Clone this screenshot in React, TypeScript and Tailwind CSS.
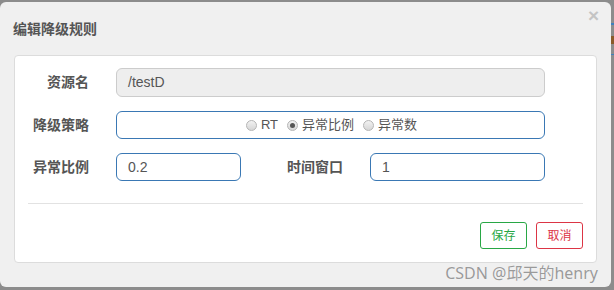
import React from "react";

const font = { fontFamily: '"Liberation Sans", "Noto Sans CJK SC", sans-serif' };

function Radio({ checked, label }: { checked?: boolean; label: string }) {
  return (
    <span className="flex items-center gap-[4px]">
      <span className="w-[11px] h-[11px] rounded-full border border-[#b5b5b5] bg-gradient-to-b from-[#f2f2f2] to-[#d6d6d6] flex items-center justify-center">
        {checked && <span className="w-[5px] h-[5px] rounded-full bg-[#555]" />}
      </span>
      <span>{label}</span>
    </span>
  );
}

export default function App() {
  return (
    <div className="w-[614px] h-[290px] bg-[#8c8c8c] pt-[2px] overflow-hidden relative" style={font}>
      <div className="absolute right-0 top-[23px] w-[3px] h-[2px] bg-[#3f7fbf]" />
      <div className="absolute right-0 top-[36px] w-[3px] h-[8px] bg-[#8a5a2a]" />
      <div className="absolute right-0 top-[54px] w-[3px] h-[1px] bg-[#3f7fbf]" />
      <div className="w-[611px] h-[285px] bg-[#f0f0f0] rounded-[6px] relative flex flex-col">
        <div className="h-[53px] flex items-center pl-[13px] pt-[1px]">
          <span className="text-[14px] font-bold text-[#555]">编辑降级规则</span>
        </div>
        <span className="absolute right-[12px] top-[4px] text-[19px] font-bold text-[#c4c4c4] leading-none">×</span>
        <div className="ml-[14px] w-[583px] h-[208px] bg-white border border-[#dcdcdc] rounded-[4px] flex flex-col">
          <div className="flex flex-col gap-[14px] pt-[12px] text-[13px] text-[#555]">
            <div className="flex items-center h-[29px]">
              <div className="w-[74px] text-right font-bold text-[14px]">资源名</div>
              <div className="ml-[27px] w-[429px] h-[29px] rounded-[6px] border border-[#cccccc] bg-[#eeeeee] flex items-center pl-[11px] text-[14px]">/testD</div>
            </div>
            <div className="flex items-center h-[28px]">
              <div className="w-[74px] text-right font-bold text-[14px]">降级策略</div>
              <div className="ml-[27px] w-[429px] h-[28px] rounded-[6px] border border-[#3a78b4] flex items-center justify-center gap-[9px] pl-[2px]">
                <Radio label="RT" />
                <Radio checked label="异常比例" />
                <Radio label="异常数" />
              </div>
            </div>
            <div className="flex items-center h-[28px]">
              <div className="w-[74px] text-right font-bold text-[14px]">异常比例</div>
              <div className="ml-[27px] w-[125px] h-[28px] rounded-[6px] border border-[#3a78b4] flex items-center pl-[11px] text-[14px]">0.2</div>
              <div className="ml-[46px] w-[58px] font-bold text-[14px]">时间窗口</div>
              <div className="ml-[25px] w-[175px] h-[28px] rounded-[6px] border border-[#3a78b4] flex items-center pl-[11px] text-[14px]">1</div>
            </div>
          </div>
          <div className="mx-[13px] mt-[22px] h-px bg-[#e2e2e2]" />
          <div className="flex justify-end gap-[9px] mr-[13px] mt-[18px]">
            <button className="w-[47px] h-[27px] rounded-[3px] border border-[#28a745] text-[#28a745] text-[12px] bg-white">保存</button>
            <button className="w-[47px] h-[27px] rounded-[3px] border border-[#dc3545] text-[#dc3545] text-[12px] bg-white">取消</button>
          </div>
        </div>
        <span
          className="absolute right-[13px] bottom-[6px] text-[16px] text-[#9a9a9a] leading-none"
          style={{ fontFamily: '"Noto Sans", "Noto Sans CJK SC", sans-serif', textShadow: "0 0 1px #fff" }}
        >
          CSDN @邱天的henry
        </span>
      </div>
    </div>
  );
}
